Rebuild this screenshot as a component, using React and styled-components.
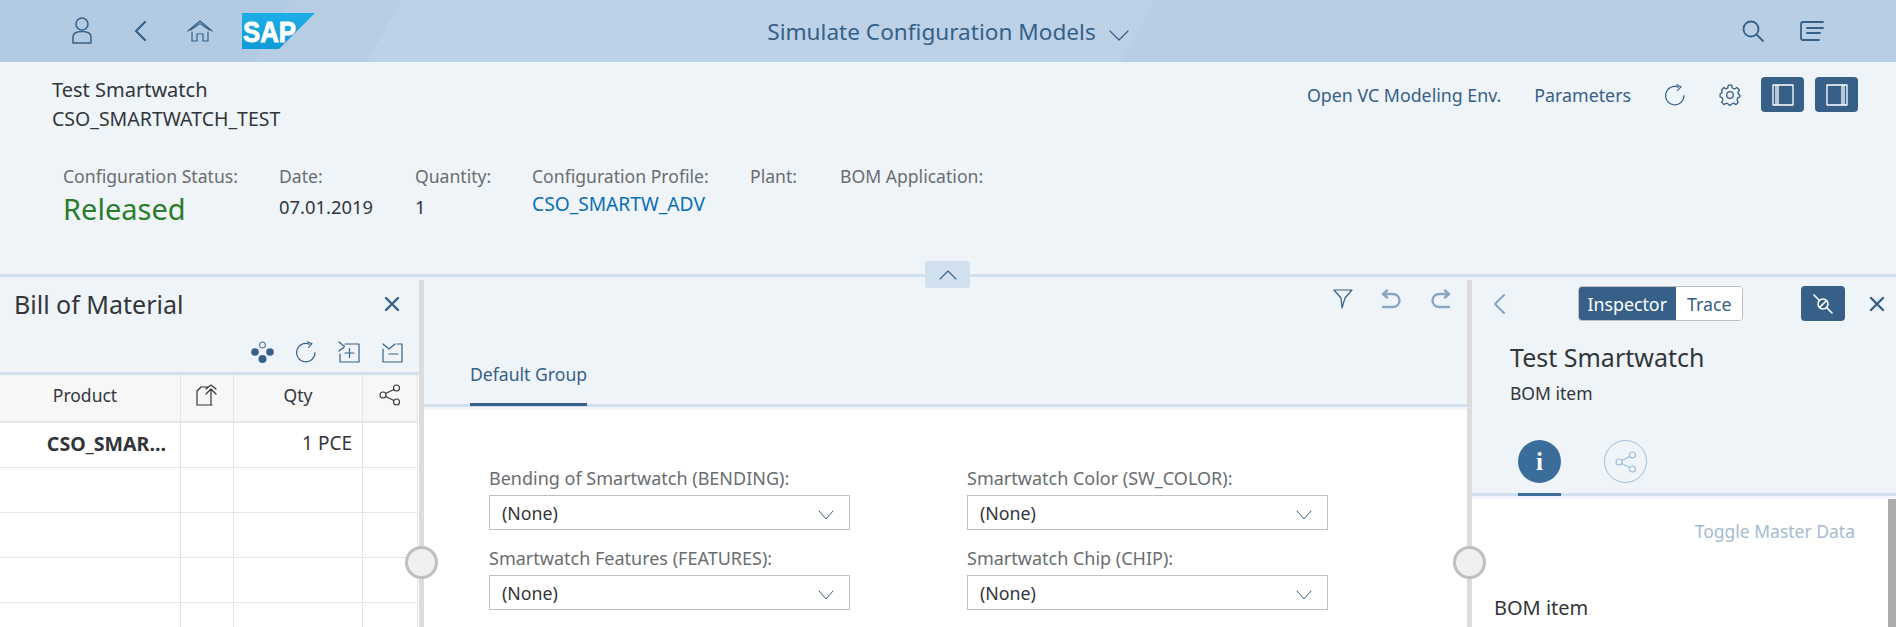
import React from 'react'
import styled, { createGlobalStyle } from 'styled-components'

const Global = createGlobalStyle`
  html, body { margin: 0; padding: 0; overflow: hidden; background: #fff; }
  body { font-family: "Noto Sans", "Open Sans", sans-serif; }
  * { box-sizing: border-box; }
`

const BLUE = '#366088'

const Page = styled.div`
  width: 1896px;
  height: 627px;
  display: flex;
  flex-direction: column;
  overflow: hidden;
`

const Shell = styled.header`
  height: 62px;
  flex: none;
  display: grid;
  grid-template-columns: 1fr auto 1fr;
  align-items: center;
  color: ${BLUE};
  background: linear-gradient(
    119.4deg,
    #b2cae2 0 253px,
    #b6cde4 253px 350px,
    #bdd2e7 350px 1006px,
    #b8cee5 1006px
  );
`

const ShellLeft = styled.div`
  display: flex;
  align-items: center;
  padding-left: 66px;
`

const ShellRight = styled.div`
  display: flex;
  justify-content: flex-end;
  align-items: center;
  gap: 34px;
  padding-right: 72px;
`

const ShellBtn = styled.span`
  display: flex;
  width: ${p => p.$w}px;
  align-items: center;
`

const ShellTitle = styled.div`
  display: flex;
  align-items: center;
  gap: 13px;
  font-size: 22.6px;
  color: ${BLUE};
  svg { margin-top: 8px; }
`

const ObjectHeader = styled.section`
  height: 212px;
  flex: none;
  background: #eff4f9;
  padding: 16px 38px 0 52px;
  position: relative;
`

const HeadTop = styled.div`
  display: flex;
  justify-content: space-between;
`

const HeadName = styled.div`
  font-size: 20px;
  line-height: 24px;
  color: #32363a;
`

const HeadId = styled.div`
  font-size: 19.5px;
  line-height: 24px;
  margin-top: 5px;
  color: #32363a;
`

const HeadActions = styled.div`
  display: flex;
  align-items: center;
  height: 35px;
  margin-top: -1px;
  color: ${BLUE};
  font-size: 17.8px;
`

const ActionLink = styled.span`
  margin-right: 33px;
`

const IconSlot = styled.span`
  display: flex;
  margin-right: ${p => p.$mr || 0}px;
`

const ToggleBtn = styled.span`
  width: 43px;
  height: 35px;
  border-radius: 4px;
  background: ${BLUE};
  color: #fff;
  display: flex;
  align-items: center;
  justify-content: center;
  margin-left: ${p => p.$ml || 0}px;
`

const Attrs = styled.div`
  display: flex;
  padding-left: 11px;
  margin-top: 33px;
`

const Attr = styled.div`
  width: ${p => p.$w}px;
`

const AttrLabel = styled.div`
  font-size: 17.6px;
  line-height: 24px;
  color: #6a6d70;
  white-space: nowrap;
`

const AttrValue = styled.div`
  font-size: 18.4px;
  line-height: 24px;
  margin-top: 7px;
  color: #32363a;
`

const StatusValue = styled.div`
  font-size: 29px;
  line-height: 34px;
  margin-top: 4px;
  color: #2b7d2b;
`

const LinkValue = styled.div`
  font-size: 19.2px;
  line-height: 24px;
  margin-top: 4px;
  color: #0a6eb4;
`

const Divider = styled.div`
  position: absolute;
  left: 0;
  right: 0;
  bottom: -3px;
  height: 3px;
  background: #d1e0ee;
  z-index: 2;
`

const Collapse = styled.div`
  position: absolute;
  left: 925px;
  top: 199px;
  width: 45px;
  height: 27px;
  background: #d1e0ee;
  border-radius: 3px;
  color: ${BLUE};
  display: flex;
  align-items: center;
  justify-content: center;
  z-index: 3;
`

const Columns = styled.main`
  flex: 1;
  display: grid;
  grid-template-columns: 424px 1048px 424px;
  background: #eff4f9;
  padding-top: 6px;
  min-height: 0;
`

const Column = styled.div`
  position: relative;
  background: #fff;
  border-right: ${p => (p.$split ? '5px solid #dcdcdc' : 'none')};
  display: flex;
  flex-direction: column;
  min-height: 0;
`

const Handle = styled.div`
  position: absolute;
  right: -19px;
  top: 266px;
  width: 33px;
  height: 33px;
  border-radius: 50%;
  background: #efefef;
  border: 3px solid #bfbfbf;
  z-index: 4;
`

const PanelHead = styled.div`
  height: 95px;
  flex: none;
  background: #eff4f9;
  border-bottom: 3px solid #d1e0ee;
  color: ${BLUE};
`

const PanelTitleRow = styled.div`
  display: flex;
  align-items: center;
  justify-content: space-between;
  height: 48px;
  padding: 0 19px 0 14px;
  font-size: 25px;
  color: #32363a;
  svg { color: ${BLUE}; }
`

const PanelTools = styled.div`
  display: flex;
  justify-content: flex-end;
  align-items: center;
  gap: 21px;
  height: 44px;
  padding: 4px 16px 0 0;
`

const Table = styled.div`
  display: grid;
  grid-template-columns: 181px 53px 129px 55px;
  grid-template-rows: 48px;
  grid-auto-rows: 45px;
  width: 418px;
`

const HeadCell = styled.div`
  background: #f7f7f7;
  border-right: 1px solid #e5e5e5;
  border-bottom: 2px solid #e5e5e5;
  display: flex;
  align-items: center;
  justify-content: center;
  padding: 0 ${p => p.$pr || 0}px 7px 0;
  font-size: 17.5px;
  color: #32363a;
`

const Cell = styled.div`
  border-right: 1px solid #e5e5e5;
  border-bottom: 1px solid #e5e5e5;
  display: flex;
  align-items: center;
  justify-content: flex-end;
  padding: 0 ${p => p.$pr || 14}px 4px 0;
  font-size: ${p => (p.$bold ? 19.6 : 19)}px;
  font-weight: ${p => (p.$bold ? 700 : 400)};
  color: #32363a;
  white-space: nowrap;
`

const CenterHead = styled.div`
  height: 127px;
  flex: none;
  background: #eff4f9;
  border-bottom: 3px solid #d1e0ee;
  display: flex;
  flex-direction: column;
  justify-content: space-between;
`

const CenterTools = styled.div`
  display: flex;
  justify-content: flex-end;
  gap: 28px;
  padding: 9px 16px 0 0;
  align-items: center;
`

const ToolIcon = styled.span`
  display: flex;
  color: ${p => (p.$muted ? '#8aa6c1' : BLUE)};
`

const TabLabel = styled.div`
  margin-left: 46px;
  width: 117px;
  font-size: 17.6px;
  line-height: 24px;
  padding-bottom: 18px;
  color: ${BLUE};
  white-space: nowrap;
  position: relative;
  &::after {
    content: '';
    position: absolute;
    left: 0;
    right: 0;
    bottom: -2px;
    height: 3px;
    background: ${BLUE};
  }
`

const Pale = styled.div`
  height: 3px;
  flex: none;
  background: #f3f7fb;
`

const Form = styled.div`
  display: grid;
  grid-template-columns: 361px 361px;
  column-gap: 117px;
  padding: 56px 0 0 65px;
  row-gap: 16px;
`

const Field = styled.div`
  display: flex;
  flex-direction: column;
`

const FieldLabel = styled.label`
  font-size: 18px;
  line-height: 24px;
  color: #6a6d70;
  margin-bottom: 5px;
  white-space: nowrap;
`

const Select = styled.div`
  height: 35px;
  border: 1px solid #bfbfbf;
  background: #fff;
  display: flex;
  align-items: center;
  justify-content: space-between;
  padding: 0 15px 0 12px;
  font-size: 17.8px;
  color: #32363a;
  svg { color: ${BLUE}; margin-top: 4px; }
`

const InspectorHead = styled.div`
  height: 216px;
  flex: none;
  background: #eff4f9;
  border-bottom: 3px solid #d1e0ee;
  padding-top: 6px;
`

const InspectorBar = styled.div`
  display: grid;
  grid-template-columns: 106px 165px 58px 44px auto;
  align-items: center;
  height: 35px;
  color: ${BLUE};
`

const BackSlot = styled.span`
  display: flex;
  padding-left: 20px;
  color: #8aa6c1;
`

const Segmented = styled.div`
  display: flex;
  height: 35px;
  border-radius: 4px;
  overflow: hidden;
  border: 1px solid #bfbfbf;
  font-size: 17.8px;
`

const Segment = styled.span`
  display: flex;
  align-items: center;
  justify-content: center;
  width: ${p => p.$w}px;
  margin: ${p => (p.$active ? '-1px 0 -1px -1px' : 0)};
  background: ${p => (p.$active ? BLUE : '#fff')};
  color: ${p => (p.$active ? '#fff' : BLUE)};
`

const UnlinkBtn = styled.span`
  grid-column: 4;
  height: 35px;
  border-radius: 4px;
  background: ${BLUE};
  color: #fff;
  display: flex;
  align-items: center;
  justify-content: center;
`

const CloseSlot = styled.span`
  display: flex;
  padding-left: 24px;
`

const InspectorTitle = styled.div`
  font-size: 25px;
  line-height: 32px;
  margin: 20px 0 0 38px;
  color: #32363a;
`

const InspectorSub = styled.div`
  font-size: 17.5px;
  line-height: 24px;
  margin: 8px 0 0 38px;
  color: #32363a;
`

const IconTabs = styled.div`
  display: flex;
  gap: 43px;
  margin: 35px 0 0 46px;
`

const IconTab = styled.div`
  width: 43px;
  height: 43px;
  border-radius: 50%;
  display: flex;
  align-items: center;
  justify-content: center;
  position: relative;
  background: ${p => (p.$active ? '#3a6d9a' : 'transparent')};
  border: ${p => (p.$active ? 'none' : '1px solid #9dbdd9')};
  color: ${p => (p.$active ? '#fff' : '#9dbdd9')};
  font-family: "Liberation Serif", serif;
  font-weight: 700;
  font-size: 25px;
  ${p =>
    p.$active &&
    `&::after {
      content: '';
      position: absolute;
      left: 0;
      right: 0;
      bottom: -13px;
      height: 3px;
      background: #3a6d9a;
    }`}
`

const InspectorBody = styled.div`
  flex: 1;
  position: relative;
  background: #fff;
  padding: 20px 41px 0 22px;
`

const Scrollbar = styled.div`
  position: absolute;
  right: 0;
  top: 0;
  bottom: 0;
  width: 8px;
  background: #ababab;
`

const ToggleData = styled.div`
  text-align: right;
  font-size: 17.5px;
  line-height: 24px;
  color: #a5bbd0;
`

const BomTitle = styled.div`
  font-size: 20px;
  line-height: 24px;
  margin-top: 53px;
  color: #32363a;
`

const Ico = ({ w = 24, h = 24, children, sw = 1.5, vb }) => (
  <svg width={w} height={h} viewBox={vb || `0 0 ${w} ${h}`} fill="none" stroke="currentColor" strokeWidth={sw} strokeLinecap="round" strokeLinejoin="round">
    {children}
  </svg>
)

const Chevron = ({ dir = 'down', w = 18, h = 10, sw = 1.1 }) => {
  const d = {
    down: `M1 1 L${w / 2} ${h - 1} L${w - 1} 1`,
    up: `M1 ${h - 1} L${w / 2} 1 L${w - 1} ${h - 1}`,
  }[dir]
  return <Ico w={w} h={h} sw={sw}><path d={d} /></Ico>
}

const Refresh = ({ s = 22 }) => (
  <Ico w={s} h={s} vb="0 0 22 22" sw={1.1}>
    <path d="M14.5 3.2 A9.2 9.2 0 1 0 20 11.5" />
    <path d="M12.5 .8 L17 2.8 L13.5 6.4" />
  </Ico>
)

const Share = ({ s = 22 }) => (
  <Ico w={s} h={s} vb="0 0 22 22" sw={1.1}>
    <circle cx="4" cy="11" r="3" />
    <circle cx="17.5" cy="4" r="3" />
    <circle cx="17.5" cy="18" r="3" />
    <path d="M6.7 9.6 L14.8 5.4 M6.7 12.4 L14.8 16.6" />
  </Ico>
)

const Close = () => (
  <Ico w={16} h={16} sw={2.4}><path d="M2 2 L14 14 M14 2 L2 14" /></Ico>
)

const SapLogo = () => (
  <svg width="73" height="36" viewBox="0 0 73 36">
    <defs>
      <linearGradient id="sapfill" x1="0" y1="0" x2="0" y2="1">
        <stop offset="0" stopColor="#1eaee6" />
        <stop offset="1" stopColor="#0f9bd9" />
      </linearGradient>
    </defs>
    <polygon points="0,0 73,0 37,36 0,36" fill="url(#sapfill)" />
    <text x="1" y="29" fontFamily="Liberation Sans, sans-serif" fontWeight="700" fontSize="30" textLength="53" lengthAdjust="spacingAndGlyphs" fill="#fff" stroke="#fff" strokeWidth=".9">SAP</text>
  </svg>
)

const Select2 = () => (
  <Select>
    (None)
    <Chevron w={16} h={10} sw={1} />
  </Select>
)

export default function App() {
  return (
    <Page>
      <Global />
      <Shell>
        <ShellLeft>
          <ShellBtn $w={67}>
            <Ico w={32} h={32} sw={1.5}>
              <circle cx="16" cy="9" r="6" />
              <path d="M7 28 V22 C7 18 11 16.5 16 16.5 C21 16.5 25 18 25 22 V28 Z" />
            </Ico>
          </ShellBtn>
          <ShellBtn $w={54}>
            <Ico w={16} h={24} sw={2.2}><path d="M12 3 L3 12 L12 21" /></Ico>
          </ShellBtn>
          <ShellBtn $w={55}>
            <Ico w={26} h={24} sw={1.2}>
              <path d="M1 12 L13 2 L25 12 M3.5 11 L13 4.5 L22.5 11" />
              <path d="M5 13 V22 H10 V15 H16 V22 H21 V13" />
            </Ico>
          </ShellBtn>
          <SapLogo />
        </ShellLeft>
        <ShellTitle>
          Simulate Configuration Models
          <Chevron w={20} h={11} sw={1.2} />
        </ShellTitle>
        <ShellRight>
          <Ico w={24} h={24} sw={1.8}>
            <circle cx="10" cy="10" r="7.5" />
            <path d="M15.5 15.5 L22 22" />
          </Ico>
          <Ico w={25} h={22} sw={1.8}>
            <path d="M24 2 H4 Q2 2 2 4 V18 Q2 20 4 20 H20" />
            <path d="M8 8 H24 M8 13 H21" />
          </Ico>
        </ShellRight>
      </Shell>

      <ObjectHeader>
        <HeadTop>
          <div>
            <HeadName>Test Smartwatch</HeadName>
            <HeadId>CSO_SMARTWATCH_TEST</HeadId>
          </div>
          <HeadActions>
            <ActionLink>Open VC Modeling Env.</ActionLink>
            <ActionLink>Parameters</ActionLink>
            <IconSlot $mr={33}><Refresh /></IconSlot>
            <IconSlot>
              <Ico w={22} h={22} sw={1.3}>
                <circle cx="11" cy="11" r="3.3" />
                <path d="M9.3 1.2 H12.7 L13.3 4 L15.6 5 L18 3.5 L20.4 6 L18.9 8.4 L19.9 10.6 L20.9 11 V13 L18.9 13.6 L18 16 L19.3 18.3 L17 20.6 L14.6 19.2 L12.7 20 L12 21 H10 L9.3 20 L7.2 19.2 L5 20.6 L2.7 18.3 L4 16 L3.1 13.6 L1.1 13 V10 L3.1 8.4 L2.6 6 L5 3.5 L7 5 L8.7 4 Z" />
              </Ico>
            </IconSlot>
            <ToggleBtn $ml={20}>
              <Ico w={22} h={22} sw={1.3}><path d="M1 1 H21 V21 H1 Z M4 1 V21 M6 1 V21" /></Ico>
            </ToggleBtn>
            <ToggleBtn $ml={11}>
              <Ico w={22} h={22} sw={1.3}><path d="M1 1 H21 V21 H1 Z M16 1 V21 M18 1 V21" /></Ico>
            </ToggleBtn>
          </HeadActions>
        </HeadTop>
        <Attrs>
          <Attr $w={216}>
            <AttrLabel>Configuration Status:</AttrLabel>
            <StatusValue>Released</StatusValue>
          </Attr>
          <Attr $w={136}>
            <AttrLabel>Date:</AttrLabel>
            <AttrValue>07.01.2019</AttrValue>
          </Attr>
          <Attr $w={117}>
            <AttrLabel>Quantity:</AttrLabel>
            <AttrValue>1</AttrValue>
          </Attr>
          <Attr $w={218}>
            <AttrLabel>Configuration Profile:</AttrLabel>
            <LinkValue>CSO_SMARTW_ADV</LinkValue>
          </Attr>
          <Attr $w={90}>
            <AttrLabel>Plant:</AttrLabel>
          </Attr>
          <Attr $w={160}>
            <AttrLabel>BOM Application:</AttrLabel>
          </Attr>
        </Attrs>
        <Divider />
        <Collapse><Chevron dir="up" w={18} h={10} /></Collapse>
      </ObjectHeader>

      <Columns>
        <Column $split>
          <PanelHead>
            <PanelTitleRow>
              Bill of Material
              <Close />
            </PanelTitleRow>
            <PanelTools>
              <svg width="23" height="23" viewBox="0 0 23 23" fill="currentColor">
                <circle cx="11.5" cy="4" r="3" fill="none" stroke="currentColor" strokeWidth="1" />
                <circle cx="4" cy="11" r="3.8" />
                <circle cx="19" cy="11" r="3.8" />
                <circle cx="11.5" cy="18" r="4" />
              </svg>
              <Refresh />
              <Ico w={22} h={22} sw={1.2}>
                <path d="M1 1 L6.5 5.5 L1 10 M7 3 H21 V21 H2 V13 M11.5 7.5 V16.5 M7 12 H16" />
              </Ico>
              <Ico w={22} h={22} sw={1.2}>
                <path d="M2 3 L8 8 L14 3 M16 3 H21 V21 H2 V8 M8 13 H17" />
              </Ico>
            </PanelTools>
          </PanelHead>
          <Table>
            <HeadCell $pr={10}>Product</HeadCell>
            <HeadCell>
              <Ico w={24} h={24} sw={1.2} >
                <path d="M13 4 H6 L2 8 V22 H17 M16 22 V7 M11 11 L16 6 L21 11 M11 6 L16 2 L21 6" />
              </Ico>
            </HeadCell>
            <HeadCell>Qty</HeadCell>
            <HeadCell><Share /></HeadCell>
            <Cell $bold>CSO_SMAR...</Cell>
            <Cell />
            <Cell $pr={10}>1 PCE</Cell>
            <Cell />
            {Array.from({ length: 16 }).map((_, i) => <Cell key={i} />)}
          </Table>
          <Handle />
        </Column>

        <Column $split>
          <CenterHead>
            <CenterTools>
              <ToolIcon>
                <Ico w={20} h={20} sw={1.2}><path d="M1 1 H19 L12 9 L9 19 L8 9 Z" /></Ico>
              </ToolIcon>
              <ToolIcon $muted>
                <Ico w={21} h={20} sw={2.4}><path d="M6 1.5 L2 5 L6 8.5 M2 5 H12 A6.5 6.5 0 0 1 12 18 H2" /></Ico>
              </ToolIcon>
              <ToolIcon $muted>
                <Ico w={21} h={20} sw={2.4}><path d="M15 1.5 L19 5 L15 8.5 M19 5 H9 A6.5 6.5 0 0 0 9 18 H19" /></Ico>
              </ToolIcon>
            </CenterTools>
            <TabLabel>Default Group</TabLabel>
          </CenterHead>
          <Pale />
          <Form>
            <Field>
              <FieldLabel>Bending of Smartwatch (BENDING):</FieldLabel>
              <Select2 />
            </Field>
            <Field>
              <FieldLabel>Smartwatch Color (SW_COLOR):</FieldLabel>
              <Select2 />
            </Field>
            <Field>
              <FieldLabel>Smartwatch Features (FEATURES):</FieldLabel>
              <Select2 />
            </Field>
            <Field>
              <FieldLabel>Smartwatch Chip (CHIP):</FieldLabel>
              <Select2 />
            </Field>
          </Form>
          <Handle />
        </Column>

        <Column>
          <InspectorHead>
            <InspectorBar>
              <BackSlot><Ico w={16} h={24} sw={2.2}><path d="M12 3 L3 12 L12 21" /></Ico></BackSlot>
              <Segmented>
                <Segment $active $w={99}>Inspector</Segment>
                <Segment $w={66}>Trace</Segment>
              </Segmented>
              <UnlinkBtn>
                <Ico w={20} h={20} sw={1.6}>
                  <circle cx="10" cy="10" r="5" />
                  <path d="M1 1 L6.5 6.5 M13.5 13.5 L19 19 M6.5 13.5 L13.5 6.5" />
                </Ico>
              </UnlinkBtn>
              <CloseSlot><Close /></CloseSlot>
            </InspectorBar>
            <InspectorTitle>Test Smartwatch</InspectorTitle>
            <InspectorSub>BOM item</InspectorSub>
            <IconTabs>
              <IconTab $active>i</IconTab>
              <IconTab><Share s={22} /></IconTab>
            </IconTabs>
          </InspectorHead>
          <Pale />
          <InspectorBody>
            <Scrollbar />
            <ToggleData>Toggle Master Data</ToggleData>
            <BomTitle>BOM item</BomTitle>
          </InspectorBody>
        </Column>
      </Columns>
    </Page>
  )
}
